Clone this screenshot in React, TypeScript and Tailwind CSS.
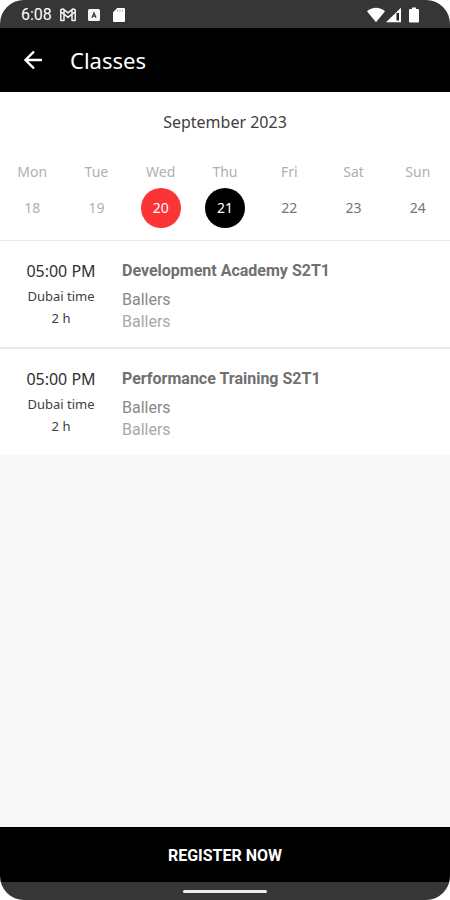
interface Day {
  name: string;
  date: number;
  state: 'past' | 'today' | 'selected' | 'upcoming';
}

interface ClassSession {
  time: string;
  zone: string;
  duration: string;
  title: string;
  club: string;
  location: string;
}

const DAYS: Day[] = [
  { name: 'Mon', date: 18, state: 'past' },
  { name: 'Tue', date: 19, state: 'past' },
  { name: 'Wed', date: 20, state: 'today' },
  { name: 'Thu', date: 21, state: 'selected' },
  { name: 'Fri', date: 22, state: 'upcoming' },
  { name: 'Sat', date: 23, state: 'upcoming' },
  { name: 'Sun', date: 24, state: 'upcoming' },
];

const SESSIONS: ClassSession[] = [
  { time: '05:00 PM', zone: 'Dubai time', duration: '2 h', title: 'Development Academy S2T1', club: 'Ballers', location: 'Ballers' },
  { time: '05:00 PM', zone: 'Dubai time', duration: '2 h', title: 'Performance Training S2T1', club: 'Ballers', location: 'Ballers' },
];

const DAY_STYLES: Record<Day['state'], string> = {
  past: 'text-[#b0b0b0]',
  today: 'bg-[#fc3436] text-white',
  selected: 'bg-black text-white',
  upcoming: 'text-[#757575]',
};

function StatusBar() {
  return (
    <div className="flex h-7 items-center justify-between bg-[#363636] pt-0.5 pr-[31px] pl-[21px] text-white">
      <div className="flex items-center">
        <span className="w-[31px] font-['Roboto',sans-serif] text-base leading-5">6:08</span>
        {/* Mail */}
        <svg className="ml-2 h-3.5 w-4" viewBox="0 0 16 14" fill="none" stroke="#f1f1f1" strokeWidth="1.5" strokeLinejoin="round">
          <path d="M.8 1.8 3 .9l5 4 5-4 2.2.9v10.700H12V6.200L8 9.400 4 6.200v6.300H.8zM4 6.200.8 3.800M12 6.200l3.200-2.400M4 1.600v4.600M12 1.600v4.600" />
        </svg>
        {/* Keyboard language */}
        <svg className="ml-3 h-3.5 w-3" viewBox="0 0 12 14">
          <rect y="1" width="12" height="12" rx="1.5" fill="#f5f5f5" />
          <path d="M4 9.700 6 4.800l2 4.900M4.700 8.200h2.600" fill="none" stroke="#363636" strokeWidth="1.2" />
        </svg>
        {/* SD card */}
        <svg className="ml-[13px] h-4 w-3" viewBox="0 0 12 16">
          <path d="M4.2 1H11a1 1 0 0 1 1 1v12a1 1 0 0 1-1 1H1a1 1 0 0 1-1-1V5.2z" fill="#fff" />
          <path d="M4.500 2.800v1.700M7 2.800v1.700M9.500 2.800v1.700" stroke="#999" strokeWidth="1" />
        </svg>
      </div>
      <div className="flex items-center">
        {/* Wi-Fi */}
        <svg className="h-4 w-[18px]" viewBox="0 0 18 16" fill="#fff">
          <path d="M9 15.3 0 4.3C2.5 2 5.6.8 9 .8s6.5 1.2 9 3.5z" />
        </svg>
        {/* Signal */}
        <svg className="ml-px h-4 w-[15px]" viewBox="0 0 15 16">
          <path d="M15 .8v14.5H0z" fill="#fff" />
          <path d="M10.5 6H13v7.5h-2.5z" fill="#222" />
        </svg>
        {/* Battery */}
        <svg className="ml-2 h-4 w-2.5" viewBox="0 0 10 16" fill="#fff">
          <path d="M3 .5h4V2h2a1 1 0 0 1 1 1v11.5a1 1 0 0 1-1 1H1a1 1 0 0 1-1-1V3a1 1 0 0 1 1-1h2z" />
        </svg>
      </div>
    </div>
  );
}

function WeekCalendar() {
  return (
    <section className="border-b border-[#e9e9e9] bg-white pt-5 pb-3">
      <h2 className="text-center text-base leading-5 text-[#404040]">September 2023</h2>
      <div className="mt-8 grid grid-cols-7">
        {DAYS.map((day) => (
          <div key={day.date} className="flex flex-col items-center gap-2">
            <span id={`day-${day.date}`} className="text-sm leading-4 text-[#b0b0b0]">{day.name}</span>
            <button
              type="button"
              aria-describedby={`day-${day.date}`}
              className={`flex size-10 items-center justify-center rounded-full text-sm ${DAY_STYLES[day.state]}`}
            >
              {day.date}
            </button>
          </div>
        ))}
      </div>
    </section>
  );
}

function SessionRow({ session }: { session: ClassSession }) {
  return (
    <li className="flex gap-6 bg-white px-6 pt-5 pb-3.5">
      <div className="w-[74px] shrink-0 text-center text-[#404040]">
        <div className="text-base leading-5 text-[#303030]">{session.time}</div>
        <div className="mt-1 text-[13px] leading-[22px]">{session.zone}</div>
        <div className="text-[13px] leading-[22px]">{session.duration}</div>
      </div>
      <div className="min-w-0 font-['Roboto',sans-serif] text-base text-[#888888]">
        <h3 className="leading-5 font-bold text-[#707070]">{session.title}</h3>
        <p className="mt-2 leading-[22px]">{session.club}</p>
        <p className="leading-[22px] text-[#a8a8a8]">{session.location}</p>
      </div>
    </li>
  );
}

export default function App() {
  return (
    <div className="min-h-screen bg-white">
      <div className="flex min-h-screen flex-col overflow-hidden rounded-3xl bg-[#f8f8f8] font-['Noto_Sans',sans-serif]">
        <StatusBar />

        <header className="flex h-16 items-center bg-black px-6 text-white">
          <button type="button" aria-label="Back">
            <svg className="h-5 w-[18px]" viewBox="0 0 18 20" fill="none" stroke="#fff" strokeWidth="2.4">
              <path d="M18 10H2M10 1.5 1.5 10l8.5 8.5" />
            </svg>
          </button>
          <h1 className="ml-7 text-[22px] leading-7">Classes</h1>
        </header>

        <main className="flex-1">
          <WeekCalendar />
          <ul className="divide-y-2 divide-[#e9e9e9]">
            {SESSIONS.map((session) => (
              <SessionRow key={session.title} session={session} />
            ))}
          </ul>
        </main>

        <button type="button" className="h-[55px] bg-black pt-0.5 font-['Roboto',sans-serif] text-base font-bold text-white">
          REGISTER NOW
        </button>
        <div className="flex h-[18px] items-center justify-center bg-[#363636]">
          <div className="h-[3px] w-[84px] rounded-full bg-[#ededed]" />
        </div>
      </div>
    </div>
  );
}
